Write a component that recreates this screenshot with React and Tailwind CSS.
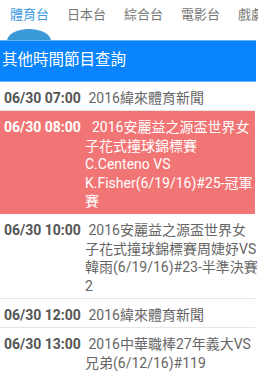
import React from 'react';

const tabs = ['體育台', '日本台', '綜合台', '電影台', '戲劇台'];

// schedule rows for the selected channel
const rows = [
  { time: '06/30 07:00', lines: [' 2016緯來體育新聞'] },
  {
    time: '06/30 08:00',
    lines: ['  2016安麗益之源盃世界女', '子花式撞球錦標賽', 'C.Centeno VS', 'K.Fisher(6/19/16)#25-冠軍', '賽'],
    active: true,
  },
  {
    time: '06/30 10:00',
    lines: [' 2016安麗益之源盃世界女', '子花式撞球錦標賽周婕妤VS', '韓雨(6/19/16)#23-半準決賽', '2'],
  },
  { time: '06/30 12:00', lines: [' 2016緯來體育新聞'] },
  { time: '06/30 13:00', lines: [' 2016中華職棒27年義大VS', '兄弟(6/12/16)#119'] },
];

const App = () => {
  return (
    <div
      className="w-[258px] h-[373px] overflow-hidden bg-white"
      style={{ fontFamily: 'Roboto, "Noto Sans CJK TC", sans-serif' }}
    >
      {/* Tabs */}
      <div className="relative h-[40px] overflow-hidden flex whitespace-nowrap">
        {tabs.map((t, i) => (
          <div
            key={t}
            className={`relative shrink-0 w-[57px] pl-[10px] pt-[5px] text-[13px] leading-[20px] ${
              i === 0 ? 'text-[#3d9be0]' : 'text-[#777]'
            }`}
          >
            {t}
            {i === 0 && (
              <div className="absolute left-[7px] top-[29px] w-[44px] h-[24px] rounded-[50%] bg-[#3a9ad8]" />
            )}
          </div>
        ))}
      </div>

      {/* Section header */}
      <div className="h-[42px] mr-[2px] bg-[#0a84fc] border-t border-b border-[#6ab6f0] flex items-center pl-[2px] text-white text-[15.5px]">
        其他時間節目查詢
      </div>

      {/* Schedule list */}
      <div className="mr-[3px]">
        {rows.map((r) => (
          <div
            key={r.time}
            className={`flex pl-[4px] pt-[7px] pb-[3px] border-b border-[#e6e6e6] text-[14px] leading-[18.4px] ${
              r.active ? 'bg-[#f27575] text-white border-transparent' : 'text-[#666]'
            }`}
          >
            <div className={`w-[81px] shrink-0 font-bold ${r.active ? 'text-white' : 'text-[#555]'}`}>
              {r.time}
            </div>
            <div className="whitespace-pre">
              {r.lines.map((l, i) => (
                <div key={i}>{l}</div>
              ))}
            </div>
          </div>
        ))}
      </div>
    </div>
  );
};

export default App;
